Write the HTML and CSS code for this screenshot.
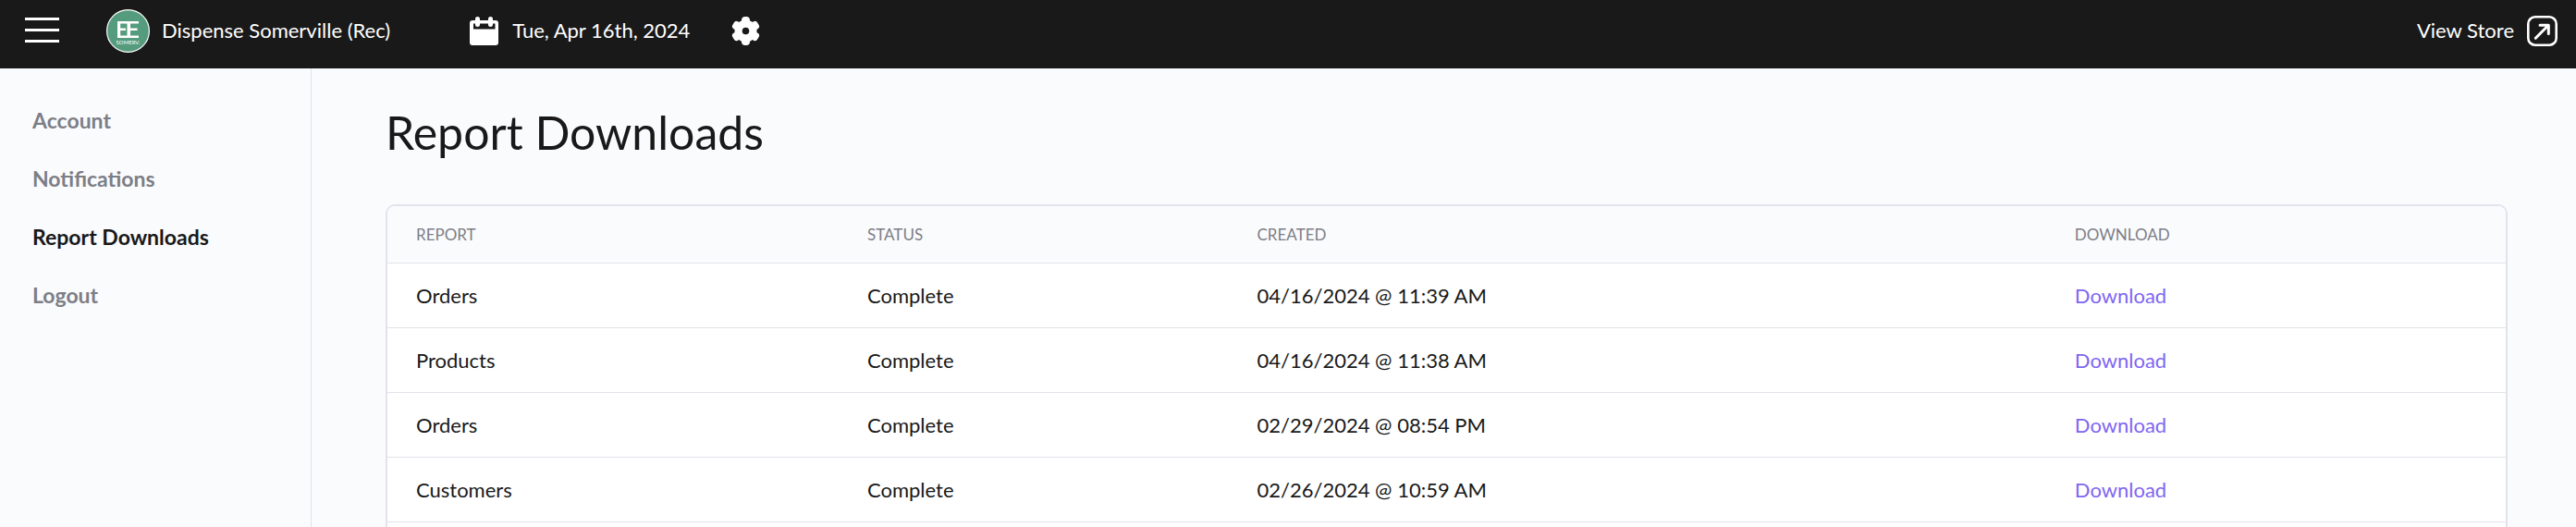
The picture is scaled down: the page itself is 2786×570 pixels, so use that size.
FILE: index.html
```html
<!DOCTYPE html>
<html lang="en">
<head>
<meta charset="utf-8">
<meta name="viewport" content="width=device-width, initial-scale=1">
<title>Report Downloads</title>
<link rel="stylesheet" href="styles.css">
</head>
<body>
<header class="topbar">
  <button class="icon-button menu-button" type="button" aria-label="Menu">
    <svg width="37" height="28" viewBox="0 0 37 28" fill="#fff"><path d="M0 0h37v3H0zM0 12h37v3H0zM0 24h37v3H0z"/></svg>
  </button>
  <button class="icon-button venue" type="button">
    <svg width="47" height="47" viewBox="0 0 47 47" aria-hidden="true">
      <circle cx="23.5" cy="23.5" r="22.9" fill="#559b7d" stroke="#fff" stroke-width="1.2"/>
      <path d="M12 13h23v2.600H12zM12 28.500h23v2.600H12zM12 13h3.200v18H12zM22.500 13h3.500v18h-3.500zM15 20.500h6v2.600h-6zM26 20.500h7.500v2.600H26z" fill="#fff"/>
      <text class="logo-text" x="23.500" y="37.500" text-anchor="middle">SOMERV.</text>
    </svg>
    <span>Dispense Somerville (Rec)</span>
  </button>
  <button class="icon-button date" type="button">
    <svg width="31" height="31" viewBox="0 0 31 31" aria-hidden="true">
      <path fill="#fff" fill-rule="evenodd" d="M3 4h3V2.500a2.500 2.500 0 0 1 5 0V4h9V2.500a2.500 2.500 0 0 1 5 0V4h3a3 3 0 0 1 3 3v21a3 3 0 0 1-3 3H3a3 3 0 0 1-3-3V7a3 3 0 0 1 3-3zM4 7.500v6h23.500v-6H25v1a2.500 2.500 0 0 1-5 0v-1h-9v1a2.500 2.500 0 0 1-5 0v-1z"/>
    </svg>
    <span>Tue, Apr 16th, 2024</span>
  </button>
  <button class="icon-button" type="button" aria-label="Settings">
    <svg width="31" height="31" viewBox="-15.500 -15.500 31 31">
      <g fill="#fff">
        <circle r="12"/>
        <rect x="-4.500" y="-15.500" width="9" height="31" rx="4"/>
        <rect x="-4.500" y="-15.500" width="9" height="31" rx="3" transform="rotate(60)"/>
        <rect x="-4.500" y="-15.500" width="9" height="31" rx="3" transform="rotate(120)"/>
      </g>
      <circle r="3.800" fill="#191919"/>
    </svg>
  </button>
  <a class="store-link" href="#store">
    <span>View Store</span>
    <svg width="33" height="33" viewBox="0 0 33 33" fill="none" stroke="#fff" aria-hidden="true">
      <rect x="1.300" y="1.300" width="30.400" height="30.400" rx="7.500" stroke-width="2.600"/>
      <path d="M9.300 24.300 22.500 11" stroke-width="3" stroke-linecap="round"/>
      <path d="M14 10.300h9.300v9.300" stroke-width="3" stroke-linecap="round" stroke-linejoin="round"/>
    </svg>
  </a>
</header>
<div class="layout">
  <nav class="sidebar" aria-label="Settings">
    <a href="#account">Account</a>
    <a href="#notifications">Notifications</a>
    <a class="active" href="#reports" aria-current="page">Report Downloads</a>
    <a href="#logout">Logout</a>
  </nav>
  <main class="content">
    <h1>Report Downloads</h1>
    <div class="card">
      <table class="reports">
        <colgroup><col class="col-report"><col class="col-status"><col class="col-created"><col></colgroup>
        <thead>
          <tr><th scope="col">REPORT</th><th scope="col">STATUS</th><th scope="col">CREATED</th><th scope="col">DOWNLOAD</th></tr>
        </thead>
        <tbody>
          <tr><td>Orders</td><td>Complete</td><td>04/16/2024 @ 11:39 AM</td><td><a href="#download-1">Download</a></td></tr>
          <tr><td>Products</td><td>Complete</td><td>04/16/2024 @ 11:38 AM</td><td><a href="#download-2">Download</a></td></tr>
          <tr><td>Orders</td><td>Complete</td><td>02/29/2024 @ 08:54 PM</td><td><a href="#download-3">Download</a></td></tr>
          <tr><td>Customers</td><td>Complete</td><td>02/26/2024 @ 10:59 AM</td><td><a href="#download-4">Download</a></td></tr>
        </tbody>
      </table>
    </div>
  </main>
</div>
</body>
</html>
```
FILE: styles.css
```css
* { box-sizing: border-box; }

body {
  margin: 0;
  min-height: 100vh;
  display: flex;
  flex-direction: column;
  background: #fafbfd;
  color: #191919;
  font: 22px/28px Lato, "Open Sans", sans-serif;
}

a { color: inherit; text-decoration: none; }
svg { display: block; flex: none; }

.topbar {
  display: flex;
  align-items: center;
  padding: 0 20px 8px 27px;
  height: 74px;
  background: #191919;
  color: #fff;
}

.icon-button {
  display: flex;
  align-items: center;
  padding: 0;
  border: 0;
  background: none;
  color: inherit;
  font: inherit;
  white-space: nowrap;
  cursor: pointer;
}

.menu-button { margin-right: 51px; }
.venue { gap: 13px; margin-right: 86px; }
.date { gap: 15px; margin-right: 45px; }
.logo-text { font: 6px Lato, sans-serif; fill: #fff; }

.store-link {
  display: flex;
  align-items: center;
  gap: 14px;
  margin-left: auto;
}

.layout { display: flex; flex: 1; }

.sidebar {
  display: flex;
  flex-direction: column;
  gap: 35px;
  flex: none;
  width: 337px;
  padding: 42px 35px;
  border-right: 1px solid #e2e3ed;
  color: #7d7e86;
  font-size: 23px;
  font-weight: 700;
}

.sidebar .active { color: #191919; }

.content {
  display: flex;
  flex-direction: column;
  flex: 1;
  padding: 39px 74px 0 80px;
}

h1 {
  margin: 0 0 48px;
  font-size: 50px;
  line-height: 60px;
  font-weight: 400;
}

.card {
  flex: 1;
  border: 2px solid #e2e3ed;
  border-bottom: 0;
  border-radius: 10px 10px 0 0;
  background: #fff;
  overflow: hidden;
}

.reports {
  width: 100%;
  table-layout: fixed;
  border-spacing: 0;
}

.col-report { width: 21.3%; }
.col-status { width: 18.4%; }
.col-created { width: 38.6%; }

.reports th,
.reports td {
  padding: 0 31px;
  border-bottom: 1px solid #e2e3e9;
  text-align: left;
}

.reports th {
  height: 62px;
  background: #fafbfd;
  color: #7d7e86;
  font-size: 17px;
  font-weight: 400;
}

.reports td { height: 70px; }
.reports td a { color: #8066f2; }
```
